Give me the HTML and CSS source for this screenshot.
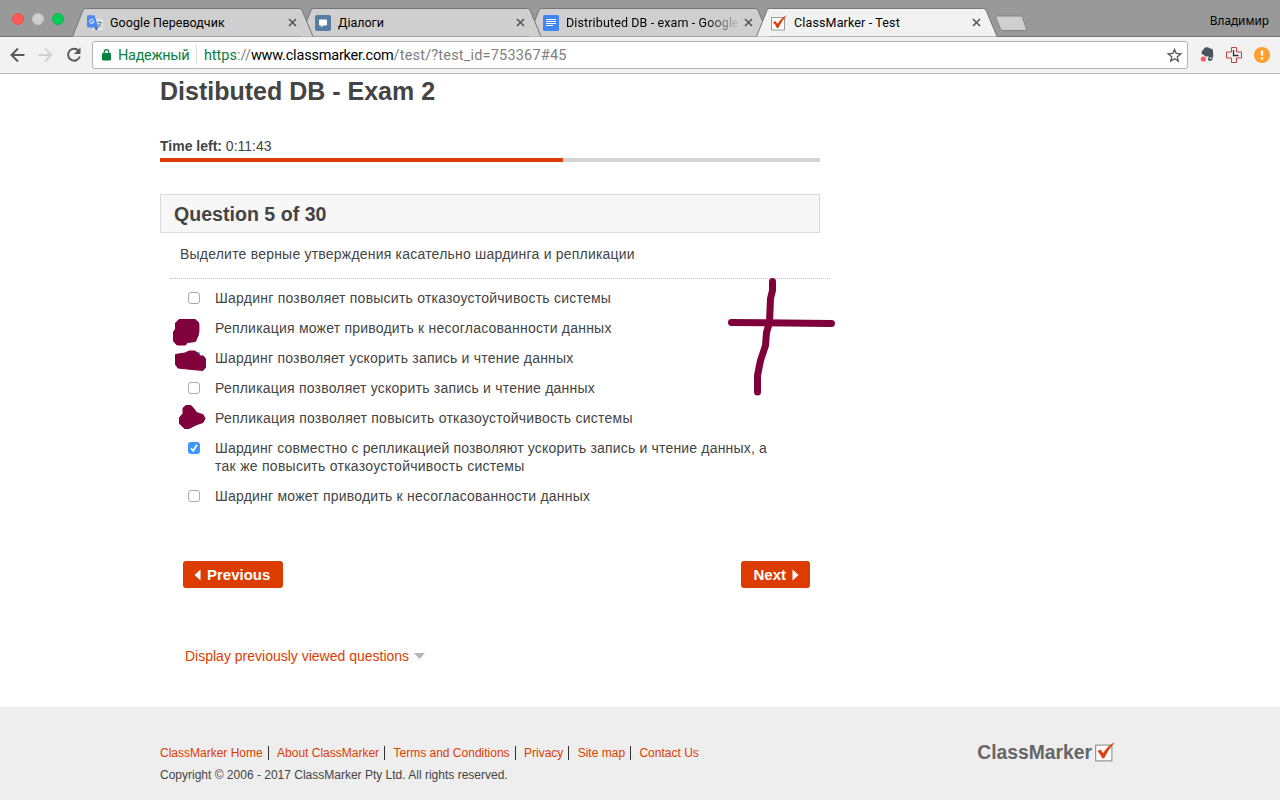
FILE: index.html
```html
<!DOCTYPE html>
<html lang="ru">
<head>
<meta charset="utf-8">
<title>ClassMarker - Test</title>
<link rel="stylesheet" href="styles.css">
</head>
<body>
<svg class="defs" width="0" height="0" aria-hidden="true">
  <defs>
    <path id="tab-shape" d="M.5 28.5 11 2.2Q11.8.5 13.500.5H227.500Q229.200.5 230 2.200L241 28.500"/>
    <path id="cross" d="M1 1l7 7M8 1 1 8"/>
    <g id="cm-check"><path d="M.5 2.500h13v12.500h-13z" fill="#fff" stroke="#999"/><path d="M2 7.300 4.300 6 6.500 9Q10 3 15.800.2 10.500 6 7.300 13H5.800Q4.500 9.500 2 7.300z" fill="#e03c0c"/></g>
  </defs>
</svg>
<header class="browser">
  <div class="strip">
    <div class="lights"><i class="light red"></i><i class="light gray"></i><i class="light green"></i></div>
    <div class="tabs">
      <div class="tab">
        <svg class="shape" width="242" height="29"><use href="#tab-shape"/></svg>
        <svg class="fav" width="16" height="16" viewBox="0 0 16 16"><rect x="6" y="4" width="10" height="11" rx="1" fill="#e4e4e4"/><path d="M10.500 7.500h4.500M12.700 6v1.500M14 7.500Q13 11 11 12M11.500 9q1 2 3 3" fill="none" stroke="#607d8b" stroke-width=".9"/><path d="M0 1.500Q0 .3 1.200.3H7.500L11.500 12.500H1.200Q0 12.500 0 11.300z" fill="#4c8bf5"/><path d="M7.500 12.500h4L9 15.500z" fill="#3152b5"/><path d="M6.500 5.200A2.100 2.100 0 1 0 6.800 6.800H4.800" fill="none" stroke="#fff"/></svg>
        <span class="label">Google Переводчик</span>
        <svg class="close" width="9" height="9"><use href="#cross"/></svg>
      </div>
      <div class="tab">
        <svg class="shape" width="242" height="29"><use href="#tab-shape"/></svg>
        <svg class="fav" width="16" height="16" viewBox="0 0 16 16"><rect width="16" height="16" rx="2" fill="#587da5"/><path d="M5 4.500h6q1 0 1 1v4q0 1-1 1H8L6 12.500v-2H5q-1 0-1-1v-4q0-1 1-1z" fill="#fff"/></svg>
        <span class="label">Діалоги</span>
        <svg class="close" width="9" height="9"><use href="#cross"/></svg>
      </div>
      <div class="tab">
        <svg class="shape" width="242" height="29"><use href="#tab-shape"/></svg>
        <svg class="fav" width="16" height="16" viewBox="0 0 16 16"><rect width="16" height="16" rx="1.500" fill="#4285f4"/><path d="M3 4.500h10M3 6.500h10M3 8.500h10M3 10.500h7" stroke="#fff"/></svg>
        <span class="label fade">Distributed DB - exam - Google</span>
        <svg class="close" width="9" height="9"><use href="#cross"/></svg>
      </div>
      <div class="tab active">
        <svg class="shape" width="242" height="29"><use href="#tab-shape"/></svg>
        <svg class="fav" width="16" height="16" viewBox="0 0 16 16"><use href="#cm-check"/></svg>
        <span class="label">ClassMarker - Test</span>
        <svg class="close" width="9" height="9"><use href="#cross"/></svg>
      </div>
    </div>
    <svg class="newtab" width="34" height="17"><path d="M3 1h23.500q1.500 0 2 1.500l4 11.500q.5 1.500-1 1.500H8.500q-1.500 0-2-1.500L1.800 2.500Q1.300 1 3 1z" fill="#cfcfcf" stroke="#838383"/></svg>
    <span class="user">Владимир</span>
  </div>
  <div class="toolbar">
    <svg class="nav" width="82" height="20" viewBox="0 0 82 20" fill="none" stroke-width="2"><path d="M14.500 10H2M8 3.500 1.500 10 8 16.500" stroke="#5a5a5a"/><path d="M28.500 10H41M35 3.500 41.500 10 35 16.500" stroke="#d2d2d2"/><path d="M68.500 5.600A6 6 0 1 0 69.800 11.500" stroke="#5a5a5a"/><path d="M70.500 2.500v6.500H64z" fill="#5a5a5a"/></svg>
    <div class="omnibox">
      <svg width="9" height="12" viewBox="0 0 9 12"><rect y="4" width="9" height="7.500" rx="1" fill="#0b8043"/><path d="M2.200 4.500V3a2.300 2.300 0 0 1 4.600 0v1.500" fill="none" stroke="#0b8043" stroke-width="1.200"/></svg>
      <span class="secure">Надежный</span>
      <i class="divider"></i>
      <span class="url"><span class="scheme">https</span>://<b>www.classmarker.com</b><span class="path">/test/?test_id=753367#45</span></span>
      <svg class="star" width="15" height="15" viewBox="0 0 15 15"><path d="M7.500 1.500 9.200 5.500 13.700 5.900 10.300 8.800 11.300 13.100 7.500 10.800 3.700 13.100 4.700 8.800 1.300 5.900 5.800 5.500z" fill="none" stroke="#555" stroke-width="1.300"/></svg>
    </div>
    <svg class="ext" width="70" height="18" viewBox="0 0 70 18"><path d="M2 5 5 1.500Q8 .5 10 2.500 13 2 13 5q1 5-1 9-1.500 1.500-3.500.5Q7 13 8.500 11.500V10Q5 11.500 4 9L1.500 8z" fill="#46565b"/><path d="M9.500 12.500q2 .8 1.500-1.500" fill="none" stroke="#eee" stroke-width=".9"/><circle cx="3.300" cy="13" r="2.600" fill="#ff5964"/><path d="M31.500 1.500h5v4.500h5v6h-5v4.500h-5v-4.500h-5v-6h5z" fill="#eef0f2" stroke="#bd4238"/><path d="M33.500 4V9.500H38.500" fill="none" stroke="#333" stroke-width="1.300"/><circle cx="62" cy="9" r="8" fill="#fba02c"/><path d="M62 4.500v5M62 11.500v2" stroke="#fff" stroke-width="2.400"/></svg>
  </div>
</header>
<main class="page">
  <h1>Distibuted DB - Exam 2</h1>
  <p class="time"><b>Time left:</b> 0:11:43</p>
  <div class="progress"><div class="done"></div></div>
  <h2>Question 5 of 30</h2>
  <p class="prompt">Выделите верные утверждения касательно шардинга и репликации</p>
  <ul class="answers">
    <li><i class="box"></i><span class="wide">Шардинг позволяет повысить отказоустойчивость системы</span></li>
    <li><i class="box"></i><span>Репликация может приводить к несогласованности данных</span></li>
    <li><i class="box on"></i><span>Шардинг позволяет ускорить запись и чтение данных</span></li>
    <li><i class="box"></i><span>Репликация позволяет ускорить запись и чтение данных</span></li>
    <li><i class="box"></i><span class="wide">Репликация позволяет повысить отказоустойчивость системы</span></li>
    <li><i class="box on"><svg width="12" height="12"><path d="M3 6.300 5.200 8.800 9 2.800" fill="none" stroke="#fff" stroke-width="1.700"/></svg></i><span><span class="narrow">Шардинг совместно с репликацией позволяют ускорить запись и чтение данных, а</span><br><span class="wider">так же повысить отказоустойчивость системы</span></span></li>
    <li><i class="box"></i><span>Шардинг может приводить к несогласованности данных</span></li>
  </ul>
  <div class="buttons">
    <a class="btn"><svg width="7" height="12"><path d="M6.500.5v11L.5 6z" fill="#fff"/></svg>Previous</a>
    <a class="btn next">Next<svg width="7" height="12"><path d="M.5.5v11L6.500 6z" fill="#fff"/></svg></a>
  </div>
  <a class="display">Display previously viewed questions<svg width="11" height="6"><path d="M0 0h11L5.500 6z" fill="#b5b5b5"/></svg></a>
</main>
<footer>
  <div>
    <nav><a>ClassMarker Home</a><a>About ClassMarker</a><a>Terms and Conditions</a><a>Privacy</a><a>Site map</a><a>Contact Us</a></nav>
    <p>Copyright © 2006 - 2017 ClassMarker Pty Ltd. All rights reserved.</p>
  </div>
  <div class="logo">ClassMarker<svg width="20" height="20" viewBox="0 0 16 16"><use href="#cm-check"/></svg></div>
</footer>
<svg class="ink" width="680" height="170" viewBox="170 275 680 170" fill="#80003c" stroke="#80003c">
  <path d="M179 319.500h16l3.500 3v12l-3 7-8 1-2 2.500h-8.500l-3.500-4v-9l2-3v-6z"/>
  <path d="M197 352h2.500v3H197z" fill="#3b99fc" stroke="none"/>
  <path d="M175.500 354.500l9.500-1.500 4-2h6l3.500 3 2 2h3l2 3v8.500l-2.500 3-11-1-14-1.500-2.500-3.500z"/>
  <path d="M183 408l3-2.500h5l3 3.500 3 4 6 1.500 2 4-2 4-6 2-8 4h-4.500l-5-5v-6l3.500-4z"/>
  <g fill="none" stroke-width="7" stroke-linecap="round" stroke-linejoin="round"><path d="M731.500 322.500 831.500 323.500"/><path d="M772.500 281.500v9l-2 8-1 24-3 10-1 13-5 15-3 15v16.500"/></g>
</svg>
</body>
</html>
```
FILE: styles.css
```css
* { box-sizing: border-box; }
body { margin: 0; width: 1280px; height: 800px; overflow: hidden; position: relative; display: flex; flex-direction: column; background: #fff; color: #444; font: 14px/18px "Liberation Sans", sans-serif; }
h1, h2, p, ul { margin: 0; padding: 0; }
i { display: block; }
.defs { position: absolute; }

.browser { font-family: Roboto, sans-serif; color: #000; flex: none; }
.strip { height: 37px; background: #999; border-bottom: 1px solid #757575; display: flex; }
.lights { display: flex; gap: 8px; padding: 13px 0 0 12px; width: 72px; }
.light { width: 12px; height: 12px; border-radius: 50%; }
.red { background: #ff5b57; border: 1px solid #ee4d4a; }
.gray { background: #d0d0d0; border: 1px solid #c3c3c3; }
.green { background: #05cc52; border: 1px solid #07b74b; }
.tabs { display: flex; padding-top: 8px; }
.tab { position: relative; width: 242px; height: 29px; margin-right: -14px; display: flex; align-items: center; padding: 0 15px; font-size: 12.500px; }
.tab:nth-child(1) { z-index: 3; letter-spacing: .06px; }
.tab:nth-child(2) { z-index: 2; }
.tab:nth-child(3) { z-index: 1; letter-spacing: .12px; }
.tab.active { z-index: 4; letter-spacing: .14px; }
.shape { position: absolute; left: 0; top: 0; z-index: -1; fill: #cfcfcf; stroke: #757575; }
.active .shape { fill: #f2f2f2; }
.fav { flex: none; margin-right: 7px; }
.label { white-space: nowrap; overflow: hidden; }
.fade { width: 174px; -webkit-mask-image: linear-gradient(90deg, #000 80%, transparent); mask-image: linear-gradient(90deg, #000 80%, transparent); }
.close { position: absolute; left: 216px; top: 10px; fill: none; stroke: #555; stroke-width: 1.600; }
.newtab { margin: 15px 0 0 9.600px; }
.user { margin: 11px 11px 0 auto; font: 11.800px/18px "Noto Sans", sans-serif; }
.toolbar { height: 37px; background: #f2f2f2; border-bottom: 1px solid #b6b6b6; display: flex; align-items: center; padding-left: 10px; }
.nav { flex: none; }
.omnibox { width: 1096px; height: 28px; border: 1px solid #b3b3b3; border-radius: 3px; background: #fff; display: flex; align-items: center; padding: 0 5px 0 9px; font-size: 14.500px; }
.secure { color: #0b8043; margin: 1px 0 0 7px; letter-spacing: -.300px; }
.divider { width: 1px; height: 20px; background: #e0e0e0; margin: 0 6.500px 0 7px; }
.url { color: #808080; margin-top: 1px; }
.url b { color: #000; font-weight: 400; letter-spacing: -.200px; }
.url .scheme { color: #0b8043; }
.path { letter-spacing: .190px; }
.star { margin-left: auto; }
.ext { margin-left: 12px; }

.page { flex: none; height: 633px; width: 670px; margin-left: 160px; }
h1 { font-size: 25px; line-height: 34px; }
.time { margin-top: 29px; }
.progress { width: 660px; height: 4px; margin-top: 3px; background: #d5d5d5; }
.done { width: 403px; height: 4px; background: #dd3c00; }
h2 { width: 660px; height: 39px; margin-top: 32px; border: 1px solid #dadada; background: #f7f7f7; padding-left: 13px; font-size: 19.600px; line-height: 39px; }
.prompt { margin-left: 10px; padding: 12px 10px 15px; border-bottom: 1px dotted #c4c4c4; letter-spacing: .210px; }
.answers { list-style: none; padding: 10px 0 0 28px; display: flex; flex-direction: column; gap: 12px; letter-spacing: .210px; white-space: nowrap; }
.answers .wide { letter-spacing: .235px; }
.answers .wider { letter-spacing: .270px; }
.answers .narrow { letter-spacing: .175px; }
.answers li { display: flex; gap: 15px; }
.box { width: 12px; height: 12px; margin-top: 3px; border: 1px solid #aaa; border-radius: 3px; background: #fff; }
.box.on { border: 0; background: #3b99fc; }
.box svg { display: block; }
.buttons { display: flex; justify-content: space-between; margin: 56px 20px 0 23px; }
.btn { display: flex; align-items: center; width: 100px; height: 27px; padding-left: 11px; gap: 6px; border-radius: 3px; background: #dd3c00; color: #fff; font-weight: 700; font-size: 15px; }
.btn.next { width: 69px; padding-left: 12.500px; }
.display { display: flex; align-items: center; gap: 5px; margin: 59px 0 0 25px; color: #dd3c00; }
footer { height: 93px; background: #eee; display: flex; padding: 37px 165px 0 160px; font-size: 12px; justify-content: space-between; }
footer nav { display: flex; }
footer a { color: #dd3c00; }
footer a + a { border-left: 1px solid #333; height: 14px; line-height: 14px; margin: 2px 0 0 5px; padding-left: 8.400px; }
footer p { margin-top: 4px; }
.logo { display: flex; gap: 3px; height: 18px; color: #666; font-size: 19.300px; font-weight: 700; }
.logo svg { margin-top: -2px; }
.ink { position: absolute; left: 170px; top: 275px; }
```
